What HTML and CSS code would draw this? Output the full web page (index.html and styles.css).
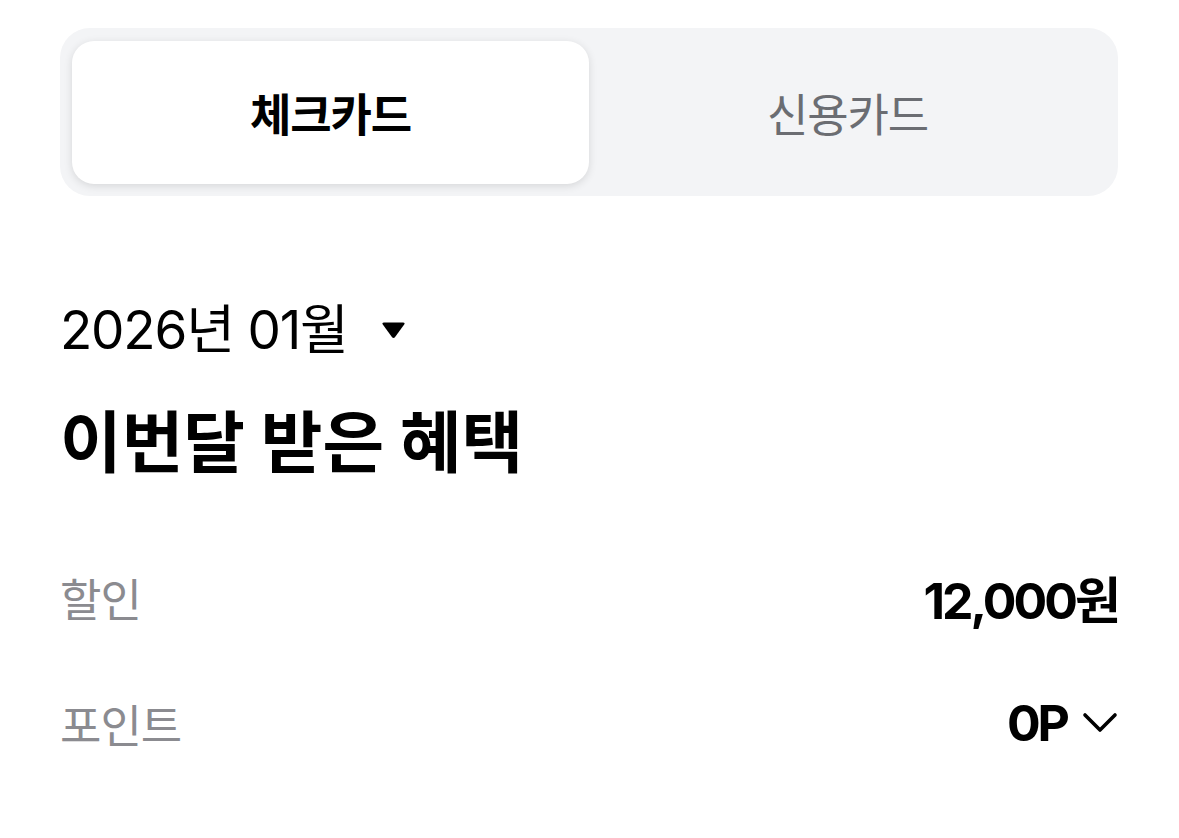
FILE: index.html
```html
<!DOCTYPE html>
<html lang="ko">
<head>
<meta charset="utf-8">
<link rel="stylesheet" href="styles.css">
</head>
<body>
<div class="page">
  <div class="segment">
    <div class="tab active">체크카드</div>
    <div class="tab">신용카드</div>
  </div>

  <div class="date-row">
    <span class="date">2026년 01월</span>
    <svg class="caret" width="25" height="18" viewBox="0 0 25 18"><path d="M2.8 1.5 H22.2 Q24.4 1.5 23.2 3.4 L14.1 16 Q12.5 18 10.9 16 L1.8 3.4 Q0.6 1.5 2.8 1.5 Z" fill="#000"/></svg>
  </div>

  <h1 class="title">이번달 받은 혜택</h1>

  <div class="rows">
    <div class="row">
      <span class="label">할인</span>
      <span class="value">12,000원</span>
    </div>
    <div class="row">
      <span class="label">포인트</span>
      <span class="value">0P
        <svg class="chev" width="36" height="22" viewBox="0 0 36 22"><path d="M3 3 L18 18 L33 3" fill="none" stroke="#000" stroke-width="3.6" stroke-linecap="round" stroke-linejoin="round"/></svg>
      </span>
    </div>
  </div>
</div>
</body>
</html>
```

FILE: styles.css
```css
html, body {
  margin: 0;
  padding: 0;
  background: #ffffff;
}

body {
  font-family: "Inter", "Noto Sans CJK KR", sans-serif;
  color: #000;
}

.page {
  padding: 28px 61px 0 60px;
}

.segment {
  background: #f3f4f6;
  border-radius: 30px;
  padding: 13px 12px 12px 12px;
  display: grid;
  grid-template-columns: 1fr 1fr;
  height: 143px;
}

.tab {
  display: flex;
  align-items: center;
  justify-content: center;
  font-size: 45px;
  letter-spacing: -1.2px;
  color: #6b6d72;
  border-radius: 22px;
}

.tab.active {
  background: #ffffff;
  color: #000;
  font-weight: 700;
  box-shadow: 0 2px 8px rgba(0, 0, 0, 0.12);
}

.date-row {
  margin-top: 104px;
  height: 60px;
  display: flex;
  align-items: center;
  gap: 33px;
}

.date {
  font-size: 53px;
  line-height: 60px;
  letter-spacing: -1.2px;
}

.caret {
  display: block;
}

.title {
  margin: 43px 0 0 0;
  font-size: 67px;
  line-height: 80px;
  font-weight: 700;
  letter-spacing: 0;
}

.rows {
  margin-top: 51px;
}

.row {
  height: 126px;
  display: flex;
  align-items: center;
  justify-content: space-between;
}

.label {
  font-size: 45px;
  color: #8b8b90;
  letter-spacing: -1px;
}

.value {
  font-size: 50px;
  font-weight: 700;
  letter-spacing: -3px;
  display: flex;
  align-items: center;
  gap: 15px;
}

.chev {
  display: block;
}
```
